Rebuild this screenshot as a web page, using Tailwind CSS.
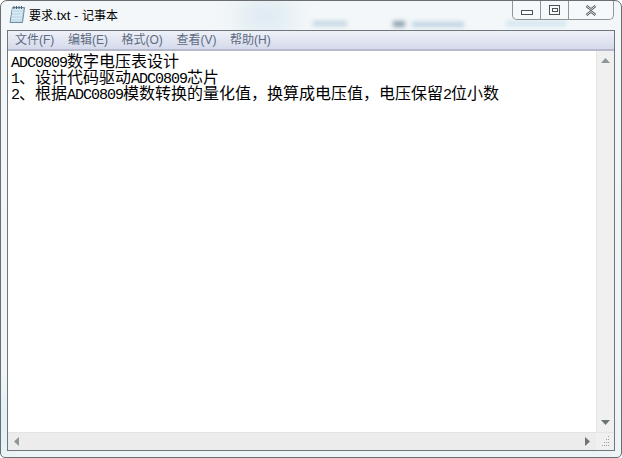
<!DOCTYPE html>
<html lang="zh-CN">
<head>
<meta charset="UTF-8">
<title>要求.txt - 记事本</title>
<script src="https://cdn.jsdelivr.net/npm/@tailwindcss/browser@4"></script>
</head>
<body class="bg-white">
<div class="relative w-[622px] h-[458px] overflow-hidden flex flex-col border border-[#6a6e71] rounded-t-[7px] rounded-b-[5px] bg-gradient-to-b from-[#f3f7f9] to-[#edf4f7] font-['Noto_Sans_CJK_SC',sans-serif]">
  <!-- blurred glass behind the frame -->
  <div class="absolute left-[240px] top-0 w-[50px] h-[30px] bg-[#dbe9f1] blur-md"></div>
  <div class="absolute left-[312px] top-[20px] w-[34px] h-[5px] bg-[#c3d6e2] blur-[2px]"></div>
  <div class="absolute left-[392px] top-[20px] w-[12px] h-[6px] bg-[#8fa3b0] blur-[2px]"></div>
  <div class="absolute left-[411px] top-[21px] w-[52px] h-[5px] bg-[#bcd3e2] blur-[2px]"></div>
  <div class="absolute left-[505px] top-[20px] w-[60px] h-[5px] bg-[#d3e4ee] blur-[2px]"></div>
  <div class="absolute left-0 top-[390px] w-[6px] h-[60px] bg-[#c8ebf7] blur-sm"></div>

  <!-- title bar -->
  <div class="relative h-[29px] flex items-start shrink-0">
    <svg class="ml-[8px] mt-[4px] w-[16px] h-[19px]" viewBox="0 0 16 19">
      <path d="M3.5 2.5h12l-2 15H1z" fill="#b4d6e8" stroke="#6d8aa0"/>
      <path d="M3.5 3.5h10.5l-1.8 13H2.2z" fill="#d6ebf4"/>
      <path d="M3.6 6l9.5 0M3.2 9l9.5 0M2.8 12l9.5 0M2.5 15l9.5 0" stroke="#b5d2e2"/>
      <path d="M5 1v3M7.5 1v3M10 1v3M12.5 1v3" stroke="#4c5a66"/>
    </svg>
    <span class="ml-[4px] mt-[6px] text-[13px] leading-[17px] text-black font-['Liberation_Sans','Noto_Sans_CJK_SC',sans-serif]"><span class="text-[12px]">要求</span>.txt - <span class="text-[12px]">记事本</span></span>
    <div class="ml-auto mr-[7px] h-[19px] w-[102px] flex border border-t-0 border-[#8d9599] rounded-b-[5px] bg-white/30">
      <div class="w-[28px] flex items-center justify-center border-r border-[#8d9599]">
        <div class="w-[12px] h-[5px] mt-[4px] border border-[#4c5357] bg-white"></div>
      </div>
      <div class="w-[28px] flex items-center justify-center border-r border-[#8d9599]">
        <div class="w-[11px] h-[10px] border border-[#4c5357] flex items-center justify-center bg-white/60">
          <div class="w-[6px] h-[4px] border border-[#4c5357]"></div>
        </div>
      </div>
      <div class="flex-1 flex items-center justify-center">
        <svg class="w-[12px] h-[11px]" viewBox="0 0 12 11">
          <path d="M1.5 1l4.5 3.5L10.5 1M1.5 10l4.5-3.5L10.5 10" fill="none" stroke="#50575b" stroke-width="2.4"/>
          <path d="M1.5 1l4.5 3.5L10.5 1M1.5 10l4.5-3.5L10.5 10" fill="none" stroke="#f4f6f7" stroke-width="0.9"/>
        </svg>
      </div>
    </div>
  </div>

  <!-- client area -->
  <div class="relative mx-[6px] h-[421px] flex flex-col border border-[#70767a] bg-white">
    <div class="h-[20px] shrink-0 flex items-center gap-[13.6px] pl-[7px] pb-[1px] bg-gradient-to-b from-[#eef1f8] to-[#d5daec] border-b-2 border-[#b6bacb] text-[12px] text-[#5e6b80] font-['Liberation_Sans','Noto_Sans_CJK_SC',sans-serif]">
      <span>文件(F)</span>
      <span>编辑(E)</span>
      <span>格式(O)</span>
      <span>查看(V)</span>
      <span>帮助(H)</span>
    </div>
    <div class="flex-1 flex min-h-0">
      <div class="flex-1 pl-[3px] pt-[1px] text-[16px] text-black">
        <div class="h-[16px] leading-[16px] whitespace-nowrap"><span class="font-['Liberation_Mono'] text-[15px] tracking-[-1px]">ADC0809</span>数字电压表设计</div>
        <div class="h-[16px] leading-[16px] whitespace-nowrap"><span class="font-['Liberation_Mono'] text-[15px] tracking-[-1px]">1</span>、设计代码驱动<span class="font-['Liberation_Mono'] text-[15px] tracking-[-1px]">ADC0809</span>芯片</div>
        <div class="h-[16px] leading-[16px] whitespace-nowrap"><span class="font-['Liberation_Mono'] text-[15px] tracking-[-1px]">2</span>、根据<span class="font-['Liberation_Mono'] text-[15px] tracking-[-1px]">ADC0809</span>模数转换的量化值，换算成电压值，电压保留<span class="font-['Liberation_Mono'] text-[15px] tracking-[-1px]">2</span>位小数</div>
      </div>
      <div class="w-[18px] flex flex-col items-center justify-between bg-[#f0f0f0] border-l border-[#e4e4e4] pt-[7px] pb-[7px]">
        <svg class="w-[9px] h-[5px]" viewBox="0 0 9 5"><path d="M4.5 0L9 5H0z" fill="#8d9599"/></svg>
        <svg class="w-[9px] h-[5px]" viewBox="0 0 9 5"><path d="M0 0h9L4.5 5z" fill="#6d7478"/></svg>
      </div>
    </div>
    <div class="h-[18px] shrink-0 flex bg-[#ececec] border-t border-[#e4e4e4]">
      <div class="flex-1 flex items-center justify-between px-[6px]">
        <svg class="w-[5px] h-[9px]" viewBox="0 0 5 9"><path d="M5 0v9L0 4.5z" fill="#8d9599"/></svg>
        <svg class="w-[5px] h-[9px]" viewBox="0 0 5 9"><path d="M0 0v9l5-4.5z" fill="#6d7478"/></svg>
      </div>
      <div class="w-[18px] bg-[#f0f0f0]">
        <svg class="w-[15px] h-[15px]" viewBox="0 0 15 15"><path d="M12 3h1v1h-1zM10 6h1v1h-1zM12 6h1v1h-1zM8 9h1v1H8zM10 9h1v1h-1zM12 9h1v1h-1zM6 12h1v1H6zM8 12h1v1H8zM10 12h1v1h-1zM12 12h1v1h-1z" fill="#9a9ea1"/></svg>
      </div>
    </div>
  </div>
</div>
</body>
</html>
